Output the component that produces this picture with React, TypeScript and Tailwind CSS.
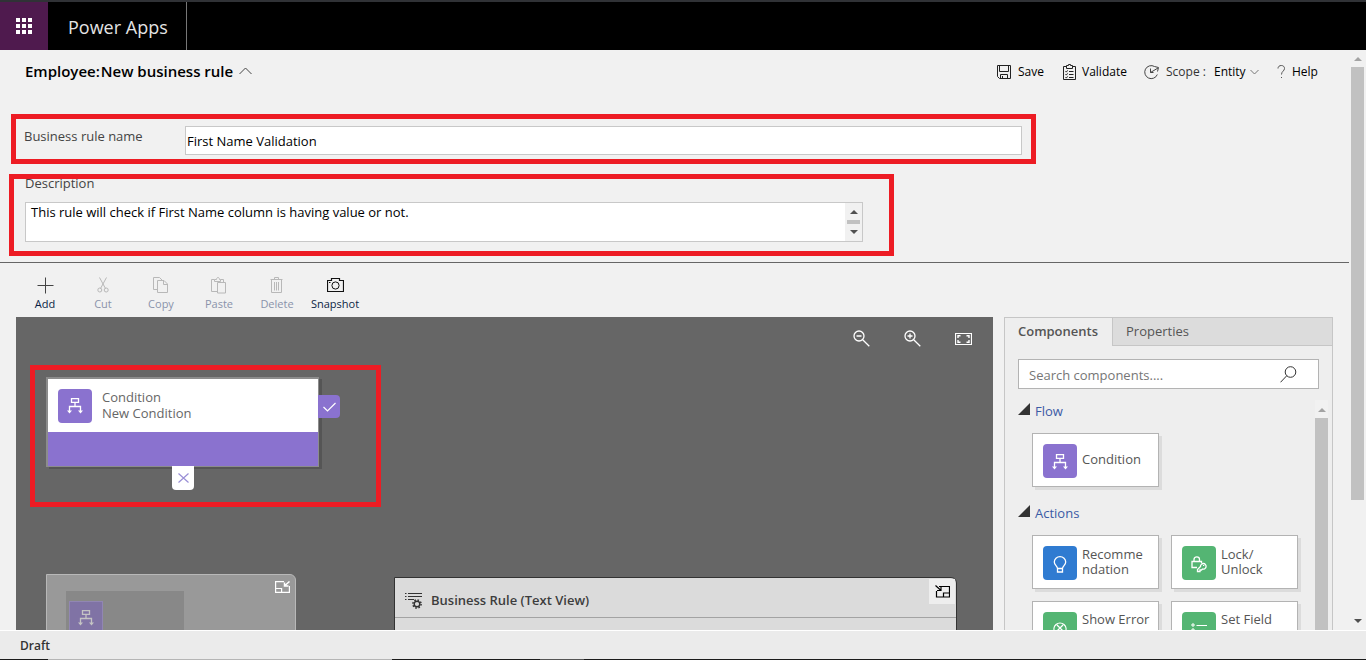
import type { ReactNode } from 'react';

type IconProps = { className?: string };

function WaffleIcon() {
  return (
    <svg width="16" height="16" viewBox="0 0 16 16" fill="white" aria-hidden="true">
      {[0, 6, 12].map((y) => [0, 6, 12].map((x) => <rect key={`${x}-${y}`} x={x} y={y} width="4" height="4" />))}
    </svg>
  );
}

function Icon({ w, h, className, children }: { w: number; h: number; className?: string; children: ReactNode }) {
  return (
    <svg
      width={w}
      height={h}
      viewBox={`0 0 ${w} ${h}`}
      fill="none"
      stroke="currentColor"
      strokeWidth="1"
      className={`shrink-0 ${className ?? ''}`}
      aria-hidden="true"
    >
      {children}
    </svg>
  );
}

const ChevronUp = () => (
  <Icon w={13} h={8} className="text-[#444]"><path d="M0.5 7 6.5 1 12.5 7" /></Icon>
);
const ChevronDown = () => (
  <Icon w={9} h={6} className="text-[#777]"><path d="M0.5 1 4.5 5 8.5 1" /></Icon>
);
const SaveIcon = () => (
  <Icon w={15} h={15} className="text-[#222]">
    <path d="M.5 .5h13v13H2.500l-2-2zM2.500 .5v6h9v-6M3.500 13.500v-4h7v4M5.500 11v2.500" />
  </Icon>
);
const ValidateIcon = () => (
  <Icon w={14} h={16} className="text-[#222]">
    <path d="M3.500 2.500h-3v13h12v-13h-3M3.500 4.500v-3h2v-1h2v1h2v3zM6 7.500h4.500M6 10.500h4.500M6 13.500h4.500" />
    <path d="M2.500 7.300l.8.8 1.300-1.700M2.500 10.300l.8.8 1.300-1.700M2.500 13.300l.8.8 1.300-1.700" />
  </Icon>
);
const ScopeIcon = () => (
  <Icon w={16} h={15} className="text-[#444]">
    <path d="M10.500 1.500A6.500 6.500 0 1 0 13.300 9.500M6.500 3.500v4h3M6.500 7.500 14 3M10.500 1.500l4 1-1 4" />
  </Icon>
);
const HelpIcon = () => (
  <Icon w={9} h={14} className="text-[#555]">
    <path d="M1 3.500C1 1.500 2.500 .5 4.300 .5 6.300 .5 7.500 1.700 7.500 3.500 7.500 6 4.500 6.300 4.500 9.500" />
    <path d="M4 12.500h1" />
  </Icon>
);
const AddIcon = () => (
  <Icon w={17} h={17} className="text-[#444]"><path d="M8.500 .5v16M.5 8.500h16" /></Icon>
);
const CutIcon = () => (
  <Icon w={12} h={16}>
    <path d="M2.500 .5 8.500 11.500M9.500 .5 3.500 11.500" />
    <circle cx="2.800" cy="13" r="2" /><circle cx="9.200" cy="13" r="2" />
  </Icon>
);
const CopyIcon = () => (
  <Icon w={16} h={17}>
    <path d="M4.500 12.500h-4v-12h6l3 3M4.500 3.500h6.500l3.500 3.500v8.500h-10zM10.500 3.500v4h4" />
  </Icon>
);
const PasteIcon = () => (
  <Icon w={16} h={17}>
    <path d="M6.500 14.500h-6v-12h3M9.500 2.500h3v3M3.500 4.500v-2h2c0-1 .5-2 1.500-2s1.500 1 1.500 2h1v2zM6.500 5.500h8v10.500h-8z" />
  </Icon>
);
const DeleteIcon = () => (
  <Icon w={14} h={17}>
    <path d="M.5 2.500h12M4.500 2.500v-2h4v2M1.500 2.500v13h10v-13M4.500 5v8.500M6.500 5v8.500M8.500 5v8.500" />
  </Icon>
);
const CameraIcon = () => (
  <Icon w={17} h={14} className="text-[#111]">
    <path d="M.5 2.500h4v-2h8v2h4v11H.5z" strokeWidth="1.200" /><circle cx="8.500" cy="7.500" r="3.600" /><path d="M2 4.500h1.500" />
  </Icon>
);

function ZoomIcon({ plus }: { plus?: boolean }) {
  return (
    <svg width="17" height="17" viewBox="0 0 17 17" fill="none" stroke="white" strokeWidth="1.300" aria-hidden="true">
      <circle cx="6" cy="6" r="5" />
      <path d="M9.700 9.700 16.300 16.300M3.500 6h5" />
      {plus && <path d="M6 3.500v5" />}
    </svg>
  );
}
const FitIcon = () => (
  <svg width="17" height="12" viewBox="0 0 17 12" fill="none" stroke="white" aria-hidden="true">
    <path d="M.5 .5h16v11H.5z" strokeWidth="1.200" />
    <path d="M3 5V2.700h2.500M11.500 2.700H14V5M3 7v2.300h2.500M11.500 9.300H14V7" strokeWidth="1.400" />
  </svg>
);
const ConditionIcon = ({ className }: IconProps) => (
  <Icon w={16} h={16} className={className}>
    <path d="M4.500 .7h7v3.600h-7zM8 4.500v4M2.500 13V8.500h11V13" strokeWidth="1.300" />
    <path d="M0 12.500h5l-2.500 3zM11 12.500h5l-2.500 3z" fill="currentColor" stroke="none" />
  </Icon>
);
const BulbIcon = () => (
  <Icon w={14} h={17}>
    <path d="M4.500 12.500C4.500 10 1.300 9 1.300 6a5.700 5.300 0 0 1 11.400 0c0 3-3.200 4-3.200 6.500v3.500h-5zM4.500 12.500h5" strokeWidth="1.300" />
  </Icon>
);
const LockIcon = () => (
  <Icon w={16} h={17}>
    <path d="M6 11.500H1v-6h9.500v1.500M3 5.500v-2C3 0 8.500 0 8.500 3.500v2" strokeWidth="1.300" />
    <path d="M9.500 10.500a2.800 2.800 0 1 1 2 2.500l-1 1h-1.500v1.500H6.500v-2z" strokeWidth="1.300" />
    <path d="M12 9.500h1.300" />
  </Icon>
);
const ErrorIcon = () => (
  <Icon w={16} h={18}>
    <path d="M3 11A6 5.700 0 1 1 13 11M5 4l6 6M11 4l-6 6M8 13v2" strokeWidth="1.300" />
  </Icon>
);
const FieldIcon = () => (
  <Icon w={16} h={14}>
    <path d="M1 1h2v2H1zM1 6h2v2H1zM1 11h2v2H1zM5.500 2.500H16M5.500 7.500H16M5.500 12.500H16" />
  </Icon>
);
const SearchIcon = () => (
  <Icon w={17} h={17} className="text-[#333]">
    <circle cx="10.500" cy="6" r="5.300" /><path d="M6.700 9.800 .5 16.300" />
  </Icon>
);
const TextViewIcon = () => (
  <Icon w={18} h={17} className="text-[#333]">
    <path d="M3 1.500h14M3 4.500h14M3 7.500h6M0 1.500h1.500M0 4.500h1.500M0 7.500h1.500" strokeWidth="1.200" />
    <circle cx="12" cy="12" r="2.800" strokeWidth="1.400" />
    <circle cx="12" cy="12" r="4.100" strokeWidth="1.500" strokeDasharray="1.600 1.620" />
  </Icon>
);
const RestoreIcon = () => (
  <Icon w={15} h={12}>
    <path d="M9 .6H.6v10.800h13.800V5M.6 7.500h6v4" strokeWidth="1.200" />
    <path d="M14.500 .5 10 4.500M9.500 1.500v3.500h4" strokeWidth="1.500" />
  </Icon>
);
const CollapseIcon = () => (
  <Icon w={15} h={13} className="text-black">
    <path d="M4 1.500h10.500v10.500H1.500V6M14.500 8h-6v4" strokeWidth="1.200" />
    <path d="M.5 .5 5.500 5M6 1.500V5.500H2" strokeWidth="1.200" />
  </Icon>
);

function Arrow({ down, className }: { down?: boolean; className: string }) {
  return (
    <svg width="8" height="4" viewBox="0 0 8 4" fill="currentColor" className={className} aria-hidden="true">
      <path d={down ? 'M0 0h8L4 4z' : 'M0 4h8L4 0z'} />
    </svg>
  );
}

const tools = [
  { label: 'Add', icon: <AddIcon />, on: true },
  { label: 'Cut', icon: <CutIcon />, on: false },
  { label: 'Copy', icon: <CopyIcon />, on: false },
  { label: 'Paste', icon: <PasteIcon />, on: false },
  { label: 'Delete', icon: <DeleteIcon />, on: false },
  { label: 'Snapshot', icon: <CameraIcon />, on: true },
];

function ComponentCard({ icon, color, top, children }: { icon: ReactNode; color: string; top?: boolean; children: ReactNode }) {
  return (
    <button type="button" className="flex h-[54px] items-start border border-[#b3b3b3] bg-white pt-[10px] pl-[10px] text-left shadow-[3px_3px_0_#dcdcdc]">
      <span className={`flex size-[34px] shrink-0 items-center justify-center rounded-[4px] pt-[2px] text-white ${color}`}>{icon}</span>
      <span className={`flex h-[31px] pl-[5px] leading-[15px] whitespace-nowrap ${top ? 'items-start' : 'items-center'}`}>
        <span>{children}</span>
      </span>
    </button>
  );
}

function Group({ title, children }: { title: string; children: ReactNode }) {
  return (
    <section className="h-[102px]">
      <h3 className="flex h-[22px] items-center gap-[5px] text-[#3b5ba5]">
        <svg width="12" height="12" viewBox="0 0 12 12" className="-mt-1" aria-hidden="true"><path d="M12 0v12H0z" fill="#333" /></svg>
        {title}
      </h3>
      <div className="grid grid-cols-2 gap-x-3 gap-y-3 pt-[11px] pl-[14px]">{children}</div>
    </section>
  );
}

export default function App() {
  return (
    <div className="flex h-screen flex-col overflow-hidden bg-[#f1f1f1] font-['Open_Sans','Noto_Sans',sans-serif] text-[13px] leading-[16px] text-[#555]">
      <header className="flex h-[50px] shrink-0 border-t-2 border-[#303236] bg-black">
        <button type="button" aria-label="App launcher" className="flex w-12 items-center justify-center bg-[#4f1a4e]"><WaffleIcon /></button>
        <div className="flex items-center border-r border-[#777] pr-[18px] pl-5 pt-px text-[18px] text-[#e4e4e4]">Power Apps</div>
      </header>

      <div className="flex min-h-0 flex-1">
        <main className="flex min-w-0 flex-1 flex-col">
          <div className="flex h-11 shrink-0 items-center justify-between pr-8 pl-[25px]">
            <button type="button" className="flex items-center pb-[2px] text-[15px] font-semibold text-black">
              <span className="pr-px">Employee:</span>
              <span className="pr-[6px]">New business rule</span>
              <ChevronUp />
            </button>
            <div className="flex items-center text-[12px] text-black">
              <button type="button" className="flex w-[66px] items-center gap-[6px]"><SaveIcon />Save</button>
              <button type="button" className="flex w-[81px] items-center gap-[5px]"><ValidateIcon />Validate</button>
              <span className="flex w-[70px] items-center gap-[6px] whitespace-nowrap text-[#333]"><ScopeIcon />Scope :</span>
              <button type="button" className="flex w-[63px] items-center gap-[4px]">Entity<ChevronDown /></button>
              <a href="#help" className="flex w-10 items-center gap-[6px]"><HelpIcon />Help</a>
            </div>
          </div>

          <div className="mt-5 mr-[313px] ml-[11px] flex h-[50px] shrink-0 border-[5px] border-[#ed1c24] pr-[9px] pl-2 pt-[7px]">
            <label htmlFor="rule-name" className="w-[161px] shrink-0 pt-[2px] text-[#444]">Business rule name</label>
            <input id="rule-name" defaultValue="First Name Validation" className="h-[29px] min-w-0 flex-1 border border-[#c8c8c8] bg-white px-px text-black outline-none" />
          </div>

          <div className="mt-[10px] mr-[455px] ml-[9px] flex h-[82px] shrink-0 flex-col border-[5px] border-[#ed1c24] pr-[26px] pl-[11px]">
            <label htmlFor="rule-description" className="-mt-1 pb-[11px] text-[#444]">Description</label>
            <div className="flex h-10 border border-[#c8c8c8] bg-white">
              <textarea id="rule-description" defaultValue="This rule will check if First Name column is having value or not." className="min-w-0 flex-1 resize-none overflow-hidden px-[5px] pt-px text-black outline-none" />
              <div className="flex w-[17px] flex-col items-center justify-between bg-[#f1f1f1] py-[7px]" aria-hidden="true">
                <Arrow className="text-[#505050]" />
                <span className="h-1 w-[13px] bg-[#c1c1c1]" />
                <Arrow down className="text-[#505050]" />
              </div>
            </div>
          </div>

          <div className="mt-[6px] flex h-[55px] shrink-0 border-t border-[#666] pl-4">
            {tools.map((t) => (
              <button key={t.label} type="button" disabled={!t.on} className="flex w-[58px] flex-col items-center gap-px pt-[12px] text-[11px]">
                <span className={`flex h-5 items-center ${t.on ? '' : 'text-[#b8b8b8]'}`}>{t.icon}</span>
                <span className={t.on ? 'text-[#0b1f45]' : 'text-[#8a93ab]'}>{t.label}</span>
              </button>
            ))}
          </div>

          <div className="flex min-h-0 flex-1 gap-[11px] pr-4 pl-4">
            <div className="relative min-w-0 flex-1 overflow-hidden bg-[#666]">
              <div className="flex justify-end gap-[34px] pt-[13px] pr-[21px]">
                <button type="button" aria-label="Zoom out"><ZoomIcon /></button>
                <button type="button" aria-label="Zoom in"><ZoomIcon plus /></button>
                <button type="button" aria-label="Fit to canvas"><FitIcon /></button>
              </div>

              <div className="absolute top-[48px] left-[14px] h-[142px] w-[351px] border-[5px] border-[#ed1c24]" />
              <div className="absolute top-[60px] left-[30px] w-[273px] border border-t-2 border-l-2 border-[#8c8c8c] bg-white shadow-[3px_2px_0_#555]">
                <div className="flex h-[53px] items-center gap-[10px] pl-[10px]">
                  <span className="flex size-[34px] items-center justify-center rounded-[4px] bg-[#8a72cf] text-white"><ConditionIcon /></span>
                  <span className="pb-px text-[#666]">Condition<br />New Condition</span>
                </div>
                <div className="h-[34px] bg-[#8a72cf]" />
                <span className="absolute top-[16px] left-full flex h-[23px] w-[22px] items-center justify-center rounded-r-[4px] bg-[#8a72cf] text-white">
                  <Icon w={13} h={10}><path d="M.5 5 4.500 9 12.500 1" strokeWidth="1.200" /></Icon>
                </span>
                <span className="absolute top-full left-[124px] flex h-6 w-[22px] items-center justify-center rounded-b-[4px] bg-white text-[#9a8fd6]">
                  <Icon w={11} h={10}><path d="M.5 .5 10.500 9.500M10.500 .5 .5 9.500" strokeWidth="1.200" /></Icon>
                </span>
              </div>

              <div className="absolute top-[257px] left-[30px] h-40 w-[250px] rounded-tr-[6px] border border-[#b8b8b8] bg-[#999]">
                <button type="button" aria-label="Collapse map" className="absolute top-[6px] right-[5px] text-white"><RestoreIcon /></button>
                <div className="mt-4 ml-[19px] h-28 w-[118px] bg-[#888] pt-[10px] pl-[3px]">
                  <span className="flex size-[34px] items-center justify-center border border-[#9186b3] bg-[#8073a5] text-[#c4c4c4]"><ConditionIcon /></span>
                </div>
              </div>

              <div className="absolute top-[260px] left-[378px] h-40 w-[563px] rounded-tr-[6px] border border-[#333] bg-[#dbdbdb]">
                <div className="flex h-10 items-center gap-[8px] border-b border-[#a3a3a3] pt-[5px] pl-[10px] text-[13px] font-semibold text-[#3d3d3d]">
                  <TextViewIcon />Business Rule (Text View)
                </div>
                <button type="button" aria-label="Collapse text view" className="absolute top-px right-px flex h-[25px] w-[26px] items-center justify-center bg-[#eee]"><CollapseIcon /></button>
              </div>
            </div>

            <aside className="flex w-[329px] shrink-0 flex-col border border-b-0 border-[#c6c6c6] bg-[#eee]">
              <div role="tablist" className="flex h-7 shrink-0">
                <button type="button" role="tab" aria-selected="true" className="w-[107px] pr-px pb-[2px] text-center font-semibold">Components</button>
                <button type="button" role="tab" aria-selected="false" className="flex-1 border-b border-l border-[#c6c6c6] bg-[#dcdcdc] pb-px pl-[13px] text-left">Properties</button>
              </div>
              <div className="mt-[13px] mr-[13px] ml-[13px] flex h-[30px] shrink-0 items-center border border-[#b3b3b3] bg-white pr-[21px]">
                <input type="search" aria-label="Search components" placeholder="Search components...." className="min-w-0 flex-1 pt-px pl-[10px] outline-none placeholder:text-[#767676]" />
                <button type="button" aria-label="Search"><SearchIcon /></button>
              </div>
              <div className="mt-[11px] flex min-h-0 flex-1 pr-1">
                <div className="min-w-0 flex-1 overflow-hidden pr-[17px] pl-[13px]">
                  <Group title="Flow">
                    <ComponentCard icon={<ConditionIcon />} color="bg-[#8a72cf]">Condition</ComponentCard>
                  </Group>
                  <Group title="Actions">
                    <ComponentCard icon={<BulbIcon />} color="bg-[#2f7bd1]">Recomme<br />ndation</ComponentCard>
                    <ComponentCard icon={<LockIcon />} color="bg-[#54b573]">Lock/<br />Unlock</ComponentCard>
                    <ComponentCard icon={<ErrorIcon />} color="bg-[#54b573]" top>Show Error</ComponentCard>
                    <ComponentCard icon={<FieldIcon />} color="bg-[#54b573]" top>Set Field</ComponentCard>
                  </Group>
                </div>
                <div className="flex w-[13px] flex-col items-center bg-[#f1f1f1] pt-[8px]" aria-hidden="true">
                  <Arrow className="text-[#a3a3a3]" />
                  <span className="mt-[6px] w-full flex-1 bg-[#c1c1c1]" />
                </div>
              </div>
            </aside>
          </div>
        </main>

        <div className="flex w-[17px] shrink-0 flex-col items-center bg-[#f1f1f1] pt-[7px] pb-[7px]" aria-hidden="true">
          <Arrow className="shrink-0 text-[#a3a3a3]" />
          <div className="mt-[6px] mb-1 flex w-[13px] flex-1 flex-col"><span className="h-[79%] bg-[#c1c1c1]" /></div>
          <Arrow down className="shrink-0 text-[#505050]" />
        </div>
      </div>

      <footer className="flex h-[30px] shrink-0 flex-col border-t border-white bg-[#ebebeb]">
        <div className="flex flex-1 items-center pt-[2px] pl-5 text-[12px] font-semibold text-[#333]">Draft</div>
        <div className="flex h-px shrink-0 bg-[#1b1b1b]"><span className="ml-12 w-[344px] bg-[#b5b5b5]" /><span className="ml-[148px] w-11 bg-[#555]" /></div>
      </footer>
    </div>
  );
}
